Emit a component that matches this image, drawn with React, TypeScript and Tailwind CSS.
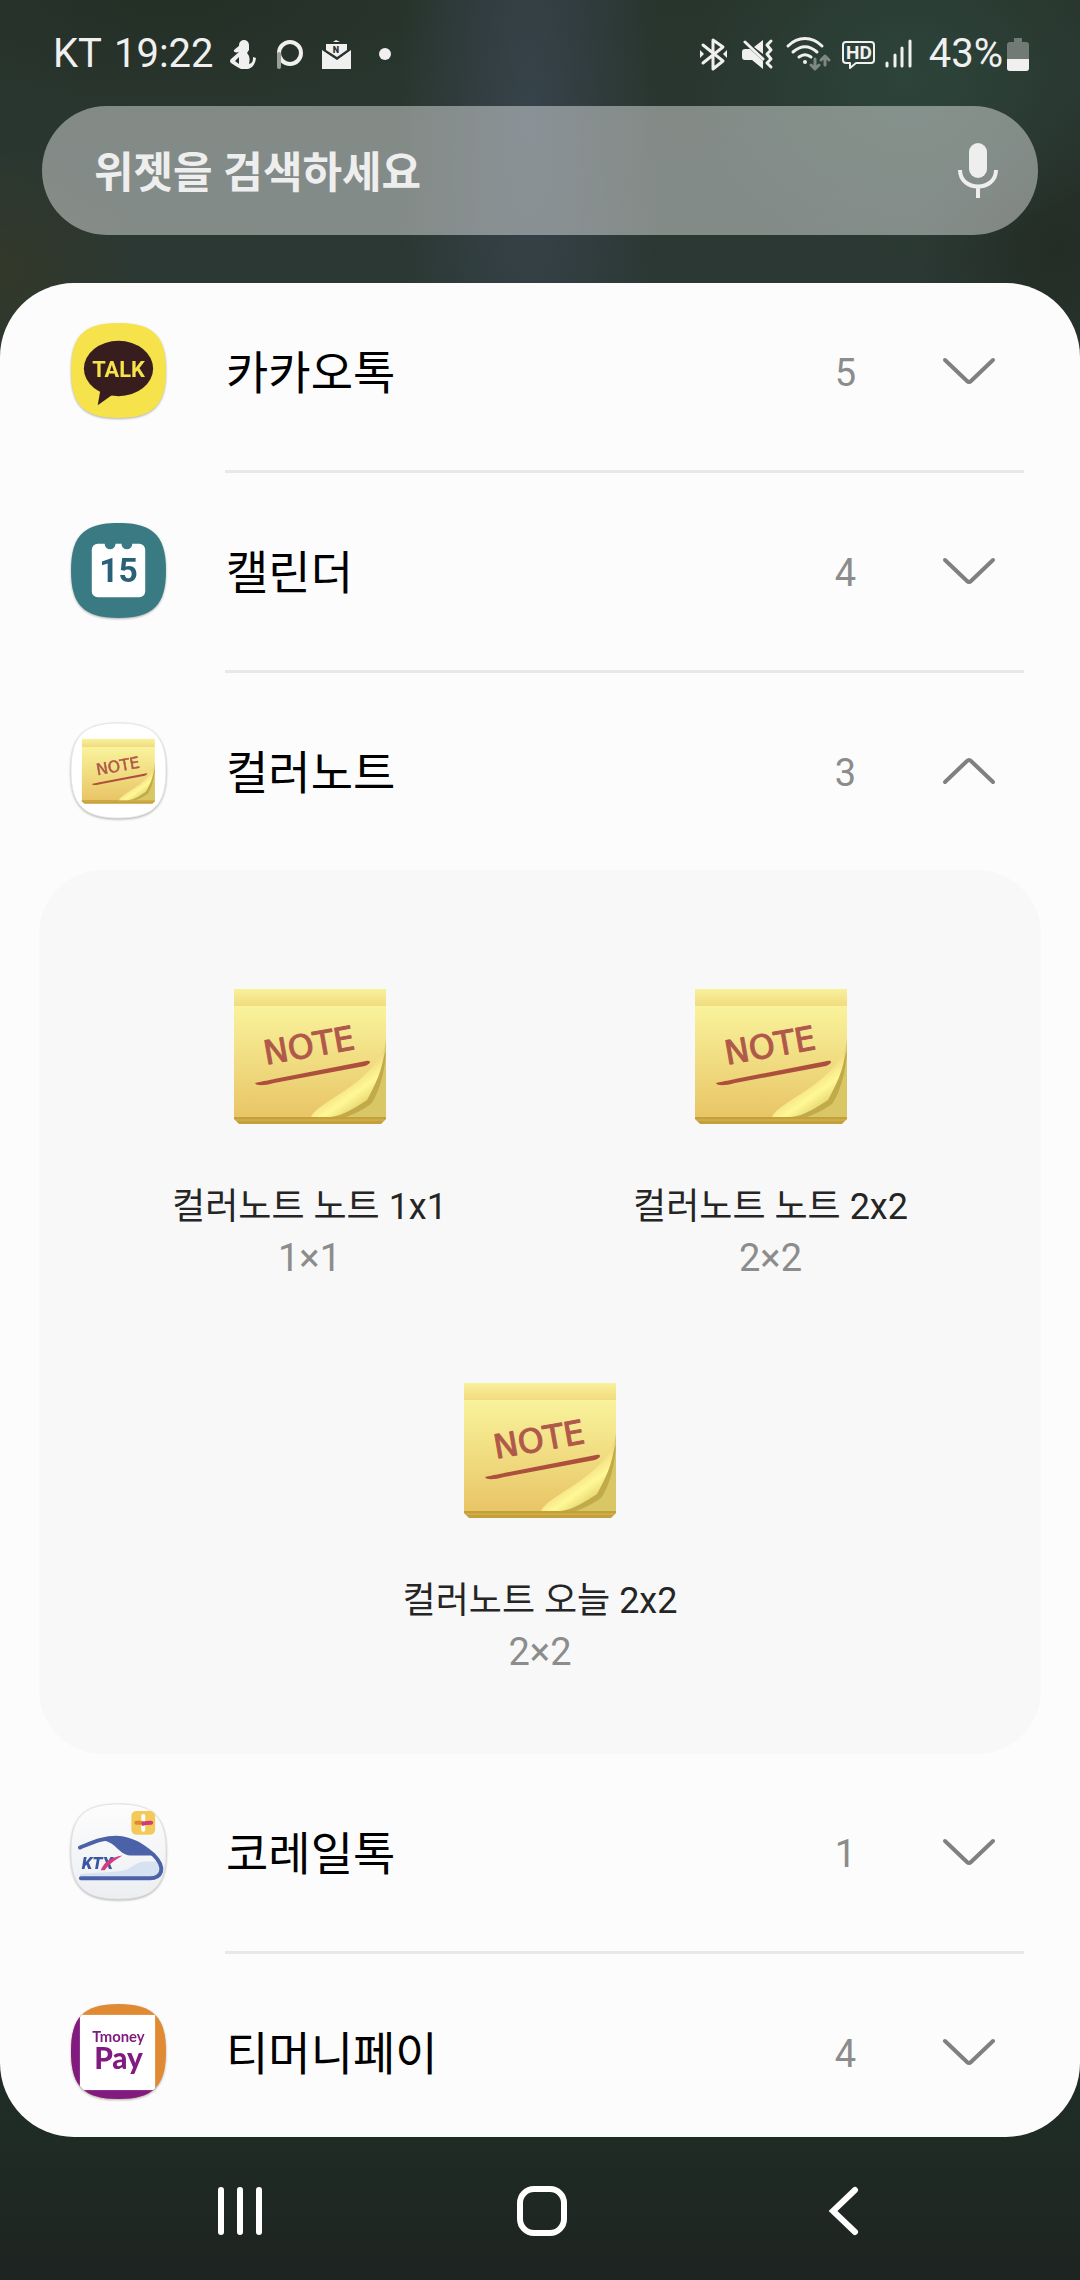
import { useState } from "react";
import clsx from "clsx";

interface Widget {
  title: string;
  size: string;
}

interface WidgetApp {
  name: string;
  count: number;
  icon: React.ReactNode;
  widgets?: Array<Widget>;
}

// rounded "squircle" used by every launcher icon, 96 x 96
const SQUIRCLE =
  "M48 0C84 0 96 14 96 48C96 82 84 96 48 96C12 96 0 82 0 48C0 14 12 0 48 0Z";

const NoteArt = () => (
  <g>
    <defs>
      <linearGradient id="noteTop" x1="0" y1="0" x2="0" y2="1">
        <stop offset="0" stopColor="#f8f19b" />
        <stop offset="1" stopColor="#f1da7e" />
      </linearGradient>
      <linearGradient id="noteBody" x1="0" y1="0" x2="0" y2="1">
        <stop offset="0" stopColor="#f9f39c" />
        <stop offset="1" stopColor="#e8c566" />
      </linearGradient>
      <linearGradient id="noteCurl" x1="0.45" y1="0.4" x2="0.75" y2="0.8">
        <stop offset="0" stopColor="#ecd277" />
        <stop offset="0.6" stopColor="#fff897" />
        <stop offset="1" stopColor="#e6d66e" />
      </linearGradient>
    </defs>
    <path d="M0 127H152V130L147 135H5L0 130Z" fill="#c4a03c" />
    <path d="M2 131H150" stroke="#d9b94f" strokeWidth="1" />
    <rect width="152" height="18" fill="url(#noteTop)" />
    <rect y="17" width="152" height="111" fill="url(#noteBody)" />
    <path d="M152 50V128H96C122 124 146 100 152 50Z" fill="#d9c765" />
    <path d="M152 62C151 84 144 106 137 115C127 122 118 126 112 128H96L133 108Z" fill="#c2aa4a" />
    <path d="M151 58C149 82 140 98 133 111C122 118 109 127 96 128H77C84 112 134 98 151 58Z" fill="url(#noteCurl)" />
    <text
      x="75"
      y="68"
      transform="rotate(-10 75 57)"
      textAnchor="middle"
      fontSize="33"
      fill="#b0584a"
      stroke="#b0584a"
      strokeWidth="1"
      strokeLinejoin="round"
      fontFamily="'DejaVu Sans', Lato, sans-serif"
    >
      NOTE
    </text>
    <path d="M21 94C30 92 36 91 40 90L132 72C138 71 137 75 131 77L40 94C30 97 22 97 21 94Z" fill="#ac503d" />
  </g>
);

const NoteImage = () => (
  <svg viewBox="0 0 152 136" className="h-[136px] w-[152px]" aria-hidden="true">
    <NoteArt />
  </svg>
);

const IconShell = ({ children }: { children: React.ReactNode }) => (
  <svg
    viewBox="0 0 96 96"
    className="size-[95px] shrink-0 overflow-visible drop-shadow-[0_1px_1px_rgba(0,0,0,0.3)]"
    aria-hidden="true"
  >
    {children}
  </svg>
);

const TalkIcon = () => (
  <IconShell>
    <path d={SQUIRCLE} fill="#f6e24a" />
    <ellipse cx="48" cy="46" rx="35" ry="28" fill="#371d1e" />
    <path d="M30 66L27 83L44 71Z" fill="#371d1e" />
    <text x="48" y="55" textAnchor="middle" fontSize="22" fontWeight="700" fill="#f6e24a" fontFamily="Roboto, sans-serif">
      TALK
    </text>
  </IconShell>
);

const CalendarIcon = () => (
  <IconShell>
    <path d={SQUIRCLE} fill="#3a7b83" />
    <path
      d="M27 21H34A5 5 0 0 0 45 21H51A5 5 0 0 0 62 21H69A6 6 0 0 1 75 27V69A6 6 0 0 1 69 75H27A6 6 0 0 1 21 69V27A6 6 0 0 1 27 21Z"
      fill="#fff"
    />
    <text x="48" y="60" textAnchor="middle" fontSize="34" fontWeight="700" fill="#2b6178" fontFamily="Roboto, sans-serif">
      15
    </text>
  </IconShell>
);

const ColorNoteIcon = () => (
  <IconShell>
    <path d={SQUIRCLE} fill="#fff" stroke="#e6e6e6" strokeWidth="1" />
    <g transform="translate(11 16) scale(0.485)">
      <NoteArt />
    </g>
  </IconShell>
);

const KorailIcon = () => (
  <IconShell>
    <defs>
      <linearGradient id="korailBg" x1="0" y1="0" x2="0" y2="1">
        <stop offset="0" stopColor="#fdfdfd" />
        <stop offset="1" stopColor="#eceef2" />
      </linearGradient>
    </defs>
    <path d={SQUIRCLE} fill="url(#korailBg)" stroke="#e3e3e3" strokeWidth="1" />
    <path d="M9 71C24 69 42 70 54 67C63 64 66 58 76 58H88C92 66 88 73 81 75H9Z" fill="#d6e2f2" />
    <path
      d="M9 44C22 39 32 34 46 34C64 35 74 44 83 51C98 66 90 75 80 75H10"
      fill="none"
      stroke="#4c62a8"
      strokeWidth="4"
      strokeLinecap="round"
      strokeLinejoin="round"
    />
    <path d="M26 37C46 35 46 51 60 52H84C74 43 64 34 46 34C38 34 32 35 26 37Z" fill="#4c62a8" />
    <text x="11" y="66" fontSize="17" fontWeight="900" fontStyle="italic" fill="#3a56a3" fontFamily="Roboto, sans-serif">
      KTX
    </text>
    <path d="M30 67C34 58 40 54 52 52C44 57 39 60 34 67Z" fill="#d63b7c" />
    <rect x="61" y="7" width="24" height="24" rx="5" fill="#f3ca5a" />
    <path d="M73 12V26" stroke="#fff" strokeWidth="4" strokeLinecap="round" />
    <path d="M66 19H72" stroke="#dd8a2c" strokeWidth="4" strokeLinecap="round" />
    <path d="M73 20C75 19 77 19 81 19" fill="none" stroke="#cf3d78" strokeWidth="4" strokeLinecap="round" />
  </IconShell>
);

const TmoneyIcon = () => (
  <IconShell>
    <defs>
      <clipPath id="tmoneyClip">
        <path d={SQUIRCLE} />
      </clipPath>
    </defs>
    <g clipPath="url(#tmoneyClip)">
      <rect width="96" height="96" fill="#e08a34" />
      <path d="M0 0L96 96H0Z" fill="#821b7f" />
      <rect x="9" y="11" width="76" height="76" fill="#fff" />
    </g>
    <text textAnchor="middle" fill="#821b7f" fontFamily="Lato, sans-serif">
      <tspan x="48" y="38" fontSize="15" fontWeight="700">
        Tmoney
      </tspan>
      <tspan x="48" y="66" fontSize="30" fontWeight="900">
        Pay
      </tspan>
    </text>
  </IconShell>
);

const apps: Array<WidgetApp> = [
  { name: "카카오톡", count: 5, icon: <TalkIcon /> },
  { name: "캘린더", count: 4, icon: <CalendarIcon /> },
  {
    name: "컬러노트",
    count: 3,
    icon: <ColorNoteIcon />,
    widgets: [
      { title: "컬러노트 노트 1x1", size: "1×1" },
      { title: "컬러노트 노트 2x2", size: "2×2" },
      { title: "컬러노트 오늘 2x2", size: "2×2" },
    ],
  },
  { name: "코레일톡", count: 1, icon: <KorailIcon /> },
  { name: "티머니페이", count: 4, icon: <TmoneyIcon /> },
];

const StatusBar = () => (
  <header className="flex h-[106px] items-center justify-between pt-0.5 pr-[51px] pl-[53px] text-[40px] leading-[48px] text-[#f0f0f0]">
    <div className="flex items-center">
      <span>KT</span>
      <span className="ml-3">19:22</span>
      <svg viewBox="0 0 170 36" className="ml-3.5 h-9 w-[170px]" fill="#f0f0f0" aria-hidden="true">
        <circle cx="16" cy="9" r="5" />
        <path d="M12 9H21V14L19 17C22 20 22 24 21 28C25 27 25 24 25 21L28 22C27 29 24 32 20 33H13C9 31 6 29 3 27Q1 25 3 23L11 16C8 17 5 16 6 14Z" />
        <path d="M7 25L11 21V28Z" fill="#28332d" />
        <circle cx="62" cy="17" r="11" fill="none" stroke="#f0f0f0" strokeWidth="4" />
        <path d="M51 18V31" stroke="#9a9f9c" strokeWidth="4" strokeLinecap="round" />
        <path d="M94 14L109 24L123 14V33H94Z" />
        <path d="M98 8H119V14L109 21L98 14Z" />
        <path d="M94 13L109 23L123 13" fill="none" stroke="#28332d" strokeWidth="1" />
        <path d="M105 6L108 4L112 6Z" />
        <text x="108" y="17" textAnchor="middle" fontSize="9" fontWeight="900" fill="#28332d" fontFamily="Roboto, sans-serif">
          N
        </text>
        <circle cx="157" cy="18" r="6" />
      </svg>
    </div>
    <div className="flex items-center">
      <svg viewBox="0 0 216 36" className="mr-3.5 h-9 w-[216px]" fill="none" stroke="#f0f0f0" strokeWidth="3" strokeLinecap="round" strokeLinejoin="round" aria-hidden="true">
        <path d="M4 9L24 25L14 33V4L24 11L4 27" />
        <path d="M1 14L5 18L1 22ZM28 14L24 18L28 22Z" fill="#f0f0f0" stroke="none" />
        <path d="M46 13H51L64 25V33L53 24H46Q43 24 43 21V16Q43 13 46 13ZM55 11L64 4V18Z" fill="#f0f0f0" stroke="none" />
        <path d="M46 6L64 23" />
        <path d="M72 5L68 9L72 14L68 18L72 23L68 27L72 31" />
        <path d="M89 10C99 0 113 0 123 10M94 16C102 9 110 9 118 16M100 21C104 18 108 18 112 21" />
        <circle cx="106" cy="26" r="2" fill="#f0f0f0" stroke="none" />
        <path d="M116 23V32M112 29L116 33L120 29M126 29V20M122 24L126 20L130 24" stroke="#7f8782" />
        <path d="M147 6H172Q175 6 175 9V24Q175 27 172 27H157L151 32V27H147Q144 27 144 24V9Q144 6 147 6Z" strokeWidth="2" />
        <text x="160" y="23" textAnchor="middle" fontSize="19" fontWeight="700" fill="#f0f0f0" stroke="none" fontFamily="Roboto, sans-serif">
          HD
        </text>
        <path d="M188 27V30M196 19V30M203 12V30M211 5V30" />
      </svg>
      <span>43%</span>
      <svg viewBox="0 0 22 34" className="ml-1 h-[34px] w-[22px]" aria-hidden="true">
        <path d="M7 1H15V5H19Q22 5 22 8V31Q22 34 19 34H3Q0 34 0 31V8Q0 5 3 5H7Z" fill="#727a75" />
        <path d="M0 22H22V31Q22 34 19 34H3Q0 34 0 31Z" fill="#f0f0f0" />
      </svg>
    </div>
  </header>
);

const SearchBar = () => (
  <div className="mx-[42px] flex h-[129px] items-center rounded-full bg-white/42 pr-10 pl-[52px]">
    <input
      type="search"
      aria-label="위젯을 검색하세요"
      placeholder="위젯을 검색하세요"
      className="min-w-0 flex-1 bg-transparent pt-1 text-[43px] leading-[64px] font-bold text-[#eeeeee] outline-none placeholder:text-[#eeeeee]"
    />
    <button type="button" aria-label="음성 검색">
      <svg viewBox="0 0 40 56" className="h-14 w-10" aria-hidden="true">
        <rect x="11" y="0" width="18" height="35" rx="9" fill="#eeeeee" />
        <path d="M2 27C2 49 38 49 38 27M20 43V55" fill="none" stroke="#eeeeee" strokeWidth="4" />
      </svg>
    </button>
  </div>
);

const Chevron = ({ open }: { open: boolean }) => (
  <svg viewBox="0 0 54 30" className={clsx("h-[30px] w-[54px]", open && "rotate-180")} aria-hidden="true">
    <path d="M3 4L25 25Q27 27 29 25L51 4" fill="none" stroke="#808080" strokeWidth="4" strokeLinecap="round" />
  </svg>
);

const WidgetGrid = ({ widgets }: { widgets: Array<Widget> }) => (
  <ul className="mx-[39px] -mb-[3px] flex flex-wrap justify-center rounded-[64px] bg-[#f8f8f8] px-9 py-12">
    {widgets.map((widget) => (
      <li key={widget.title} className="flex h-[394px] w-[461px] flex-col items-center pt-[71px]">
        <NoteImage />
        <p className="mt-[57px] text-[36px] leading-[51px] text-[#252525]">{widget.title}</p>
        <p className="text-[38px] leading-[51px] text-[#8c8c8c]">{widget.size}</p>
      </li>
    ))}
  </ul>
);

export default function App() {
  const [openApp, setOpenApp] = useState("컬러노트");

  return (
    <div className="flex h-screen flex-col bg-[#28332d] bg-[radial-gradient(ellipse_130px_500px_at_49%_120px,#37434b,transparent),radial-gradient(ellipse_220px_180px_at_84%_80px,#2d443a,transparent),radial-gradient(ellipse_140px_180px_at_98%_250px,#232c25,transparent),radial-gradient(ellipse_140px_120px_at_0px_270px,#333829,transparent),radial-gradient(ellipse_300px_120px_at_16%_0px,#242f26,transparent),linear-gradient(180deg,#28352d_0%,#2b3833_12%,#1f2b25_94%,#1e2421_100%)] font-[Roboto,'Noto_Sans_CJK_KR',sans-serif]">
      <StatusBar />
      <SearchBar />

      <main className="mt-12 min-h-0 flex-1 overflow-y-auto rounded-[74px] bg-[#fcfcfc] [scrollbar-width:none]">
        <ul className="-mt-[13px]">
          {apps.map((app, index) => {
            const open = openApp === app.name && !!app.widgets;

            return (
              <li key={app.name}>
                <button
                  type="button"
                  aria-expanded={open}
                  onClick={() => setOpenApp(openApp === app.name ? "" : app.name)}
                  className="flex h-[200px] w-full items-center pl-[71px] text-left"
                >
                  {app.icon}
                  <span className="ml-[60px] flex-1 pt-1.5 text-[46px] leading-[64px] text-black">{app.name}</span>
                  <span className="mr-[86px] pt-1.5 text-[38px] leading-[48px] text-[#8c8c8c]">{app.count}</span>
                  <span className="mr-[84px] pt-0.5">
                    <Chevron open={open} />
                  </span>
                </button>
                {open && app.widgets && <WidgetGrid widgets={app.widgets} />}
                {!open && index < apps.length - 1 && (
                  <div className="mr-14 -mb-[3px] ml-[225px] h-[3px] bg-[#e8e8e8]" />
                )}
              </li>
            );
          })}
        </ul>
      </main>

      <nav className="flex h-[143px] shrink-0 items-center justify-center pt-1 pl-1">
        <button type="button" aria-label="최근 앱" className="flex w-[302px] justify-center">
          <svg viewBox="0 0 50 50" className="size-[50px]" aria-hidden="true">
            <path d="M6 4V46M25 4V46M44 4V46" stroke="#fff" strokeWidth="6" strokeLinecap="round" />
          </svg>
        </button>
        <button type="button" aria-label="홈" className="flex w-[302px] justify-center">
          <svg viewBox="0 0 50 50" className="size-[50px]" aria-hidden="true">
            <rect x="3" y="3" width="44" height="44" rx="14" fill="none" stroke="#fff" strokeWidth="6" />
          </svg>
        </button>
        <button type="button" aria-label="뒤로" className="flex w-[302px] justify-center">
          <svg viewBox="0 0 50 50" className="size-[50px]" aria-hidden="true">
            <path d="M36 4L14 25L36 46" fill="none" stroke="#fff" strokeWidth="6" strokeLinecap="round" />
          </svg>
        </button>
      </nav>
    </div>
  );
}
